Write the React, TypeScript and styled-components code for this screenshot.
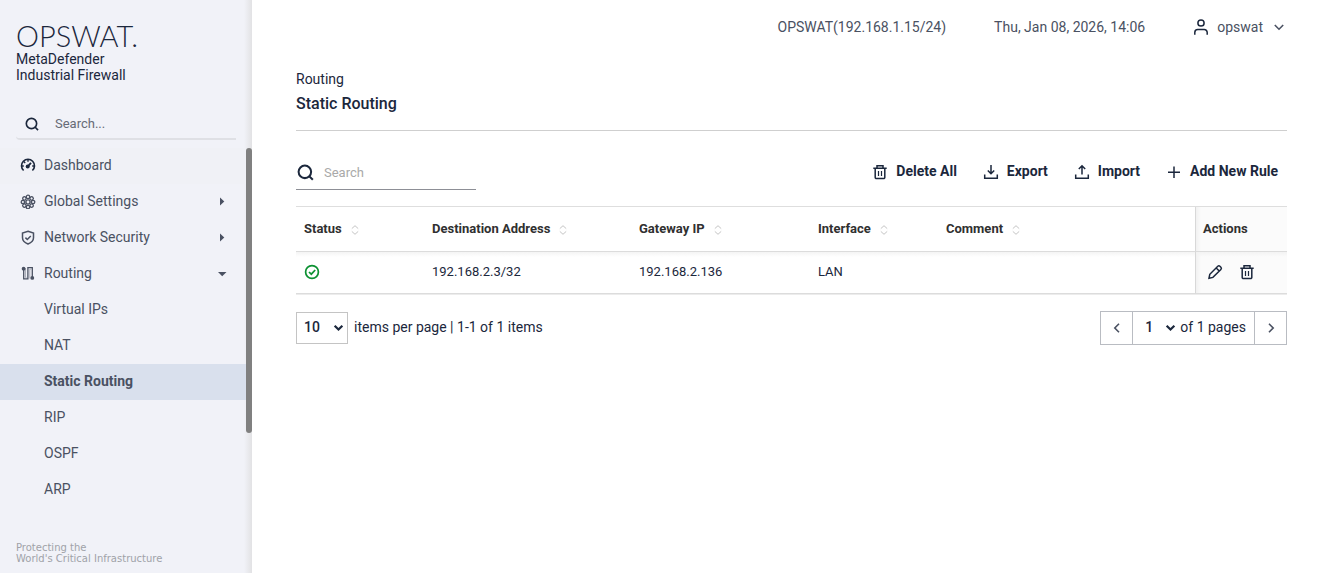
import React from "react";
import styled, { createGlobalStyle, css } from "styled-components";

const navy = "#1b273c";
const slate = "#4a5162";

const GlobalStyle = createGlobalStyle`
  *, *::before, *::after { box-sizing: border-box; }
  body {
    margin: 0;
    background: #ffffff;
    color: ${navy};
    font-family: Roboto, "Liberation Sans", sans-serif;
    font-size: 14px;
    line-height: 20px;
  }
  button, input, select { font: inherit; color: inherit; }
`;

/* ---------- shared ---------- */

const Icon = styled.svg<{ $size?: number }>`
  display: block;
  flex: none;
  width: ${(p) => p.$size ?? 16}px;
  height: ${(p) => p.$size ?? 16}px;
  fill: none;
  stroke: currentColor;
  stroke-width: 1.5;
`;

const PlainButton = styled.button`
  display: flex;
  align-items: center;
  padding: 0;
  border: 0;
  background: none;
  cursor: pointer;
`;

const Page = styled.div`
  display: flex;
  min-height: 100vh;
`;

/* ---------- sidebar ---------- */

const Sidebar = styled.aside`
  position: relative;
  display: flex;
  flex-direction: column;
  flex: none;
  width: 252px;
  padding-right: 6px;
  background: linear-gradient(to right, #f1f2f8 0, #f1f2f8 244px, #e2e2e4 252px);
`;

const ScrollThumb = styled.div`
  position: absolute;
  top: 148px;
  right: 0;
  width: 6px;
  height: 285px;
  border-radius: 3px;
  background: #808080;
`;

const Brand = styled.a`
  display: block;
  padding: 21px 16px 0;
  color: ${navy};
  text-decoration: none;
`;

const BrandName = styled.span`
  display: block;
  font-family: Lato, sans-serif;
  font-size: 29px;
  font-weight: 300;
  line-height: 30px;
`;

const ProductName = styled.span`
  display: block;
  font-size: 14px;
  line-height: 16px;
`;

const SideSearch = styled.label`
  display: flex;
  align-items: center;
  gap: 16px;
  height: 32px;
  margin: 25px 10px 8px 16px;
  padding: 1px 0 0 9px;
  border-bottom: 2px solid #dfe0e5;
  border-bottom-left-radius: 4px;
`;

const SideSearchInput = styled.input`
  flex: 1;
  min-width: 0;
  padding: 0;
  border: 0;
  outline: 0;
  background: none;
  font-size: 13px;
  &::placeholder { color: #666b76; opacity: 1; }
`;

const Nav = styled.nav`
  display: flex;
  flex-direction: column;
`;

const NavLink = styled.a<{ $tone?: "hover" | "selected" }>`
  display: flex;
  align-items: center;
  gap: 8px;
  height: 36px;
  padding: 0 16px 2px 20px;
  color: ${slate};
  text-decoration: none;
  ${(p) => p.$tone === "hover" && css`background: #f0f1f6;`}
  ${(p) => p.$tone === "selected" && css`background: #d9e0ed; font-weight: 700;`}
`;

const SubLink = styled(NavLink)`
  padding-left: 44px;
`;

const NavLabel = styled.span`
  flex: 1;
`;

const Tagline = styled.p`
  margin: auto 0 0;
  padding: 24px 0 9px 16px;
  color: #a0a2a8;
  font-family: "DejaVu Sans", sans-serif;
  font-size: 10px;
  line-height: 11px;
  white-space: nowrap;
`;

/* ---------- main ---------- */

const Main = styled.main`
  flex: 1;
  min-width: 0;
  padding: 0 39px 24px 44px;
`;

const TopBar = styled.header`
  display: flex;
  align-items: center;
  justify-content: flex-end;
  gap: 48px;
  height: 54px;
  color: ${slate};
`;

const UserButton = styled(PlainButton)`
  gap: 8px;
`;

const Crumb = styled.p`
  margin: 15px 0 5px;
`;

const PageTitle = styled.h1`
  margin: 0;
  padding-bottom: 16px;
  border-bottom: 1px solid #cfcfcf;
  font-size: 16px;
  font-weight: 500;
  line-height: 20px;
`;

const Toolbar = styled.div`
  display: flex;
  align-items: center;
  justify-content: space-between;
  padding: 23px 0 16px;
`;

const TableSearch = styled.label`
  display: flex;
  align-items: center;
  gap: 10px;
  width: 180px;
  height: 36px;
  padding: 2px 0 0 1px;
  border-bottom: 1px solid #8d8f96;
`;

const TableSearchInput = styled(SideSearchInput)`
  &::placeholder { color: #a9a9a9; }
`;

const Actions = styled.div`
  display: flex;
  gap: 26px;
  padding-right: 9px;
`;

const ActionButton = styled(PlainButton)`
  gap: 8px;
  padding-bottom: 2px;
  font-weight: 700;
  svg { margin-top: 2px; }
`;

/* ---------- table ---------- */

const Grid = styled.table`
  width: 100%;
  table-layout: fixed;
  border-collapse: separate;
  border-spacing: 0;
  border-top: 1px solid #dedede;
  border-bottom: 1px solid #ececec;
  font-size: 13px;
`;

const Col = styled.col<{ $w?: number }>`
  ${(p) => p.$w && css`width: ${p.$w}px;`}
`;

const Head = styled.th<{ $pinned?: boolean }>`
  height: 45px;
  padding: 0 8px 1px;
  border-bottom: 1px solid #dcdcdc;
  color: #303030;
  font-weight: 700;
  text-align: left;
  ${(p) => p.$pinned && css`
    padding-left: 7px;
    border-left: 1px solid #d8d8d8;
    background: linear-gradient(to right, #f1f1f1, #fbfbfb 5px);
  `}
`;

const HeadInner = styled.span`
  display: flex;
  align-items: center;
  gap: 8px;
  svg { margin-top: 2px; }
`;

const Cell = styled.td<{ $pinned?: boolean }>`
  height: 42px;
  padding: 0 8px 1px;
  border-bottom: 1px solid #dcdcdc;
  background: linear-gradient(#f4f4f4, #ffffff 5px);
  ${(p) => p.$pinned && css`
    border-left: 1px solid #d8d8d8;
    background: linear-gradient(#f3f3f3, transparent 5px), linear-gradient(to right, #f1f1f1, #fbfbfb 5px);
  `}
`;

const RowActions = styled.div`
  display: flex;
  gap: 16px;
  padding-left: 3px;
`;

/* ---------- paging ---------- */

const Footer = styled.div`
  display: flex;
  align-items: center;
  justify-content: space-between;
  padding-top: 16px;
`;

const PageSize = styled.label`
  display: flex;
  align-items: center;
  gap: 6px;
`;

const PagingText = styled.span`
  padding-bottom: 2px;
`;

const SelectBox = styled.span<{ $boxed?: boolean; $width: number }>`
  position: relative;
  display: flex;
  width: ${(p) => p.$width}px;
  ${(p) => p.$boxed && css`border: 1px solid #c4c4c4;`}
`;

const Select = styled.select`
  appearance: none;
  width: 100%;
  height: 30px;
  padding: 0 16px 2px 7px;
  border: 0;
  background: none;
  font-weight: 500;
`;

const SelectArrow = styled.span`
  position: absolute;
  top: 9px;
  right: 3px;
  pointer-events: none;
`;

const Pager = styled.div`
  display: flex;
  align-items: center;
  height: 34px;
  border: 1px solid #b9bcc2;
`;

const PagerButton = styled(PlainButton)`
  justify-content: center;
  align-self: stretch;
  width: 31px;
  color: ${slate};
`;

const PagerInfo = styled.label`
  display: flex;
  align-items: center;
  gap: 1px;
  align-self: stretch;
  padding: 0 8px 0 5px;
  border: solid #b9bcc2;
  border-width: 0 1px;
`;

/* ---------- icons ---------- */

const SearchIcon = ({ size }: { size: number }) => (
  <Icon $size={size} viewBox="0 0 16 16">
    <g strokeWidth="1.900">
      <circle cx="7.400" cy="7.400" r="5.900" />
      <path d="M11.400 11.400 14.900 14.900" />
    </g>
  </Icon>
);

const GaugeIcon = () => (
  <Icon viewBox="0 0 16 16" color={navy}>
    <path d="M3.600 13.500A6.500 6.500 0 1 1 12.400 13.500" strokeWidth="1.600" />
    <path d="M8 2.500v2.200M1.800 9h2M12.200 9h2M3.900 4.600l1.300 1.300" strokeWidth="1.400" />
    <circle cx="7.700" cy="9.400" r="2" fill="currentColor" stroke="none" />
    <path d="M7.800 9.400 11 5.800" strokeWidth="1.800" />
  </Icon>
);

const petals = [0, 45, 90, 135, 180, 225, 270, 315];

const GearIcon = () => (
  <Icon viewBox="0 0 16 16" color={slate}>
    <g transform="translate(0 1)">
      {petals.map((a) => (
        <circle key={a} cx="8" cy="2.900" r="1.700" strokeWidth="1.300" transform={`rotate(${a} 8 8)`} />
      ))}
      <circle cx="8" cy="8" r="2.100" strokeWidth="1.400" />
    </g>
  </Icon>
);

const ShieldIcon = () => (
  <Icon viewBox="0 0 16 16" color={slate}>
    <path d="M8 2.300 13.500 4V8.700c0 3-2.400 5-5.500 6.300C4.900 13.700 2.500 11.700 2.500 8.700V4Z" />
    <path d="m5.400 8.600 1.900 1.900 3.500-3.600" />
  </Icon>
);

const RouteIcon = () => (
  <Icon viewBox="0 0 16 16" color={slate}>
    <path d="M3.700 4v9.900h4.200V2.700h4.400V12.400" strokeWidth="1.300" />
    <path d="M5.500 3v9.400h1M9.800 13.500V4.200h1" strokeWidth=".8" opacity=".5" />
    <circle cx="3.600" cy="3.700" r="1.900" fill="currentColor" stroke="none" />
    <circle cx="12.300" cy="12.900" r="1.900" fill="currentColor" stroke="none" />
  </Icon>
);

const Caret = ({ open }: { open?: boolean }) => (
  <Icon $size={16} viewBox="0 0 16 16">
    <path d={open ? "M4 7h8.500L8.200 11.200Z" : "M6 4.500v8l4.300-4Z"} fill="currentColor" stroke="none" />
  </Icon>
);

const UserIcon = () => (
  <Icon viewBox="0 0 16 16" color={navy}>
    <circle cx="8" cy="4" r="3.100" />
    <path d="M1.800 15.800v-2.300A3 3 0 0 1 4.800 10.500h6.400A3 3 0 0 1 14.200 13.500v2.300" />
  </Icon>
);

const TrashIcon = () => (
  <Icon viewBox="0 0 16 16">
    <path d="M1.300 4.300h13.400M5 4V1.800h6V4M3.200 4.300v9.100a1.200 1.200 0 0 0 1.200 1.200h7.200a1.200 1.200 0 0 0 1.200-1.200V4.300" />
    <path d="M6.500 7v5M9.500 7v5" strokeWidth="1.200" />
  </Icon>
);

const TransferIcon = ({ up }: { up?: boolean }) => (
  <Icon viewBox="0 0 16 16">
    <path d="M1.700 10.500v3.700h12.600V10.500" />
    <path d={up ? "M8 10.500V2M4.800 5 8 1.800 11.200 5" : "M8 1v8.500M4.800 6.500 8 9.700l3.200-3.200"} />
  </Icon>
);

const PlusIcon = () => (
  <Icon viewBox="0 0 16 16">
    <path d="M8 2.500v11.500M2 8.300h12" />
  </Icon>
);

const SortIcon = () => (
  <Icon $size={10} viewBox="0 0 10 10" color="#c4c4c4">
    <path d="M1.800 3.600 5 .7l3.200 2.900M1.800 6.400 5 9.300l3.200-2.900" strokeWidth="1" />
  </Icon>
);

const OkIcon = () => (
  <Icon viewBox="0 0 16 16" color="#0c9132" role="img" aria-label="Enabled">
    <g strokeWidth="1.700">
      <circle cx="8" cy="8" r="6.400" />
      <path d="m5 8 2.300 2.200L11.200 6" />
    </g>
  </Icon>
);

const PencilIcon = () => (
  <Icon viewBox="0 0 16 16">
    <path d="m2 14.200.8-3.900 8-8a1.500 1.500 0 0 1 2.100 0l1 1a1.500 1.500 0 0 1 0 2.100l-8 8ZM9.200 4l3 3" />
  </Icon>
);

const Chevron = ({ turn = 0, size = 12, view = "0 0 12 12", weight = 1.6 }: { turn?: number; size?: number; view?: string; weight?: number }) => (
  <Icon $size={size} viewBox={view}>
    <path d="m1.800 4 4.200 4.200L10.200 4" strokeWidth={weight} transform={`rotate(${turn} 6 6)`} />
  </Icon>
);

/* ---------- data ---------- */

const sections = [
  { label: "Dashboard", icon: <GaugeIcon />, hover: true },
  { label: "Global Settings", icon: <GearIcon />, caret: <Caret /> },
  { label: "Network Security", icon: <ShieldIcon />, caret: <Caret /> },
  { label: "Routing", icon: <RouteIcon />, caret: <Caret open /> },
];

const routingPages = ["Virtual IPs", "NAT", "Static Routing", "RIP", "OSPF", "ARP"];

const columns = ["Status", "Destination Address", "Gateway IP", "Interface", "Comment"];

export default function App() {
  return (
    <Page>
      <GlobalStyle />
      <Sidebar>
        <Brand href="#">
          <BrandName>OPSWAT.</BrandName>
          <ProductName>MetaDefender</ProductName>
          <ProductName>Industrial Firewall</ProductName>
        </Brand>
        <SideSearch>
          <SearchIcon size={14} />
          <SideSearchInput type="text" placeholder="Search..." aria-label="Search menu" />
        </SideSearch>
        <Nav>
          {sections.map((s) => (
            <NavLink key={s.label} href="#" $tone={s.hover ? "hover" : undefined}>
              {s.icon}
              <NavLabel>{s.label}</NavLabel>
              {s.caret}
            </NavLink>
          ))}
          {routingPages.map((label) => (
            <SubLink key={label} href="#" $tone={label === "Static Routing" ? "selected" : undefined}>
              {label}
            </SubLink>
          ))}
        </Nav>
        <Tagline>
          Protecting the
          <br />
          World's Critical Infrastructure
        </Tagline>
        <ScrollThumb />
      </Sidebar>

      <Main>
        <TopBar>
          <span>OPSWAT(192.168.1.15/24)</span>
          <span>Thu, Jan 08, 2026, 14:06</span>
          <UserButton type="button">
            <UserIcon />
            opswat
            <Chevron size={16} view="-2 -2 16 16" />
          </UserButton>
        </TopBar>

        <Crumb>Routing</Crumb>
        <PageTitle>Static Routing</PageTitle>

        <Toolbar>
          <TableSearch>
            <SearchIcon size={17} />
            <TableSearchInput type="text" placeholder="Search" aria-label="Search rules" />
          </TableSearch>
          <Actions>
            <ActionButton type="button"><TrashIcon />Delete All</ActionButton>
            <ActionButton type="button"><TransferIcon />Export</ActionButton>
            <ActionButton type="button"><TransferIcon up />Import</ActionButton>
            <ActionButton type="button"><PlusIcon />Add New Rule</ActionButton>
          </Actions>
        </Toolbar>

        <Grid>
          <colgroup>
            <Col $w={128} />
            <Col $w={207} />
            <Col $w={179} />
            <Col $w={128} />
            <Col />
            <Col $w={92} />
          </colgroup>
          <thead>
            <tr>
              {columns.map((c) => (
                <Head key={c} scope="col">
                  <HeadInner>{c}<SortIcon /></HeadInner>
                </Head>
              ))}
              <Head scope="col" $pinned>Actions</Head>
            </tr>
          </thead>
          <tbody>
            <tr>
              <Cell><OkIcon /></Cell>
              <Cell>192.168.2.3/32</Cell>
              <Cell>192.168.2.136</Cell>
              <Cell>LAN</Cell>
              <Cell />
              <Cell $pinned>
                <RowActions>
                  <PlainButton type="button" aria-label="Edit"><PencilIcon /></PlainButton>
                  <PlainButton type="button" aria-label="Delete"><TrashIcon /></PlainButton>
                </RowActions>
              </Cell>
            </tr>
          </tbody>
        </Grid>

        <Footer>
          <PageSize>
            <SelectBox $boxed $width={52}>
              <Select defaultValue="10"><option>10</option></Select>
              <SelectArrow><Chevron size={11} weight={2.4} /></SelectArrow>
            </SelectBox>
            <PagingText>items per page | 1-1 of 1 items</PagingText>
          </PageSize>
          <Pager>
            <PagerButton type="button" aria-label="Previous page"><Chevron turn={90} /></PagerButton>
            <PagerInfo>
              <SelectBox $width={41}>
                <Select defaultValue="1"><option>1</option></Select>
                <SelectArrow><Chevron size={11} weight={2.4} /></SelectArrow>
              </SelectBox>
              <PagingText>of 1 pages</PagingText>
            </PagerInfo>
            <PagerButton type="button" aria-label="Next page"><Chevron turn={-90} /></PagerButton>
          </Pager>
        </Footer>
      </Main>
    </Page>
  );
}
